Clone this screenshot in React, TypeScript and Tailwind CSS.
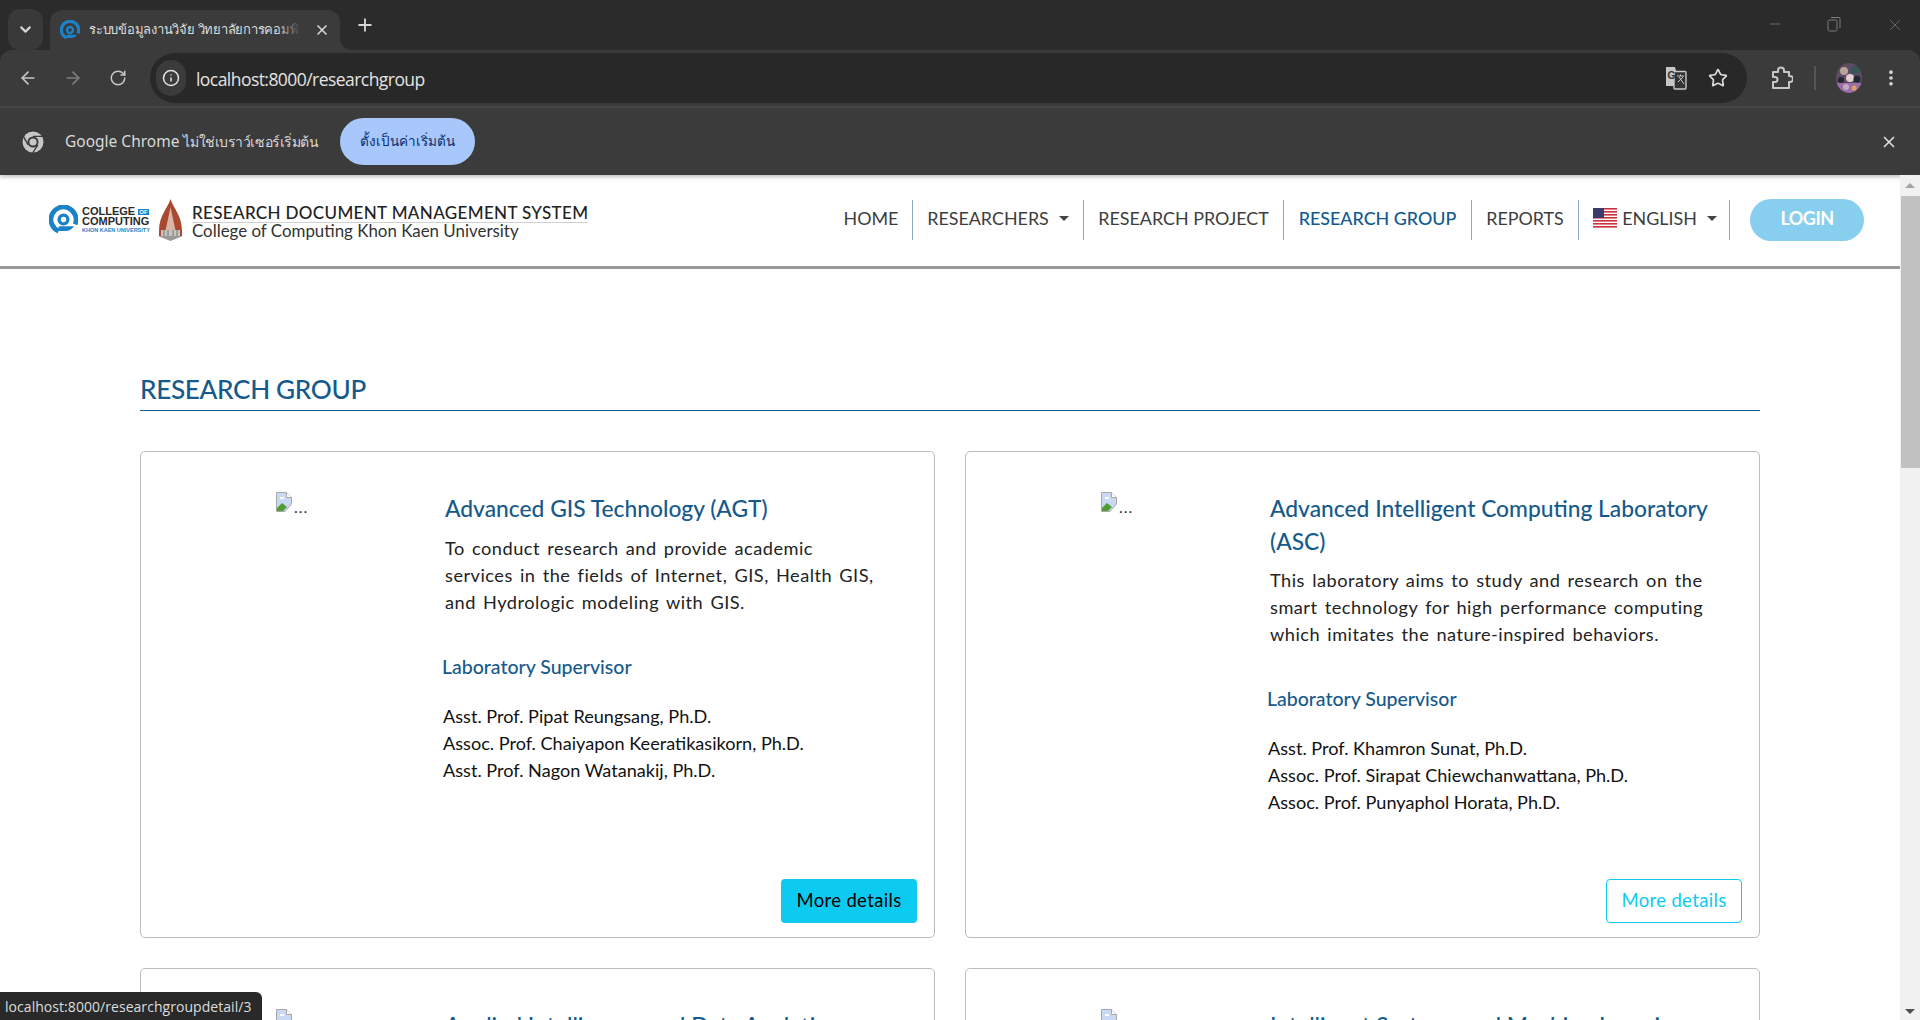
import React from "react";
import { ArrowLeft, ArrowRight, RotateCw, Info, Star, EllipsisVertical, ChevronDown, X, Plus, Minus } from "lucide-react";

const UI = "font-['Open_Sans','Noto_Sans',sans-serif]";
const SITE = "font-['Lato','Noto_Sans',sans-serif]";

function CocLogo({ size = 20 }: { size?: number }) {
  return (
    <svg width={size} height={size} viewBox="0 0 30 30" className="shrink-0">
      <path d="M10 27 A13 13 0 1 1 27 20" fill="none" stroke="#1b82c8" strokeWidth="5" />
      <path d="M10 22 V27 H18 A13 13 0 0 0 26 22 Z" fill="#1b82c8" />
      <circle cx="15" cy="15" r="4.5" fill="none" stroke="#1b82c8" strokeWidth="3.5" />
    </svg>
  );
}

function Temple() {
  return (
    <svg width="25" height="42" viewBox="0 0 25 42" className="shrink-0">
      <path d="M12.5 0 C15 9 24 16 24 32 L24 37 H1 V32 C1 16 10 9 12.5 0Z" fill="#a9492f" />
      <path d="M12.5 8 L15 20 L18 34 H7 L10 20Z" fill="#d9b7a8" />
      <path d="M3 31 H22 V37 H3Z" fill="#c8c3c0" />
      <path d="M6 31 V37 M10 31 V37 M15 31 V37 M19 31 V37" stroke="#777" strokeWidth="1" />
      <path d="M0 37 H25 L12.5 42Z" fill="#999" />
    </svg>
  );
}

function Flag() {
  return (
    <svg width="24" height="20" viewBox="0 0 24 20" className="shrink-0">
      <rect width="24" height="20" fill="#fff" />
      {[0, 3, 6, 9, 12, 15, 18].map((y) => (
        <rect key={y} y={y} width="24" height="1.6" fill="#c8323c" />
      ))}
      <rect width="11" height="10" fill="#3c3b6e" />
    </svg>
  );
}

function BrokenImage() {
  return (
    <svg width="16" height="20" viewBox="0 0 16 20" className="shrink-0">
      <path d="M0.5 0.5 H10.5 L15.5 5.5 V12 L9 19.5 H0.5Z" fill="#c9d9f3" stroke="#a8a8a8" />
      <path d="M10.5 0.5 V5.5 H15.5" fill="#fff" stroke="#a8a8a8" />
      <path d="M1 19 V16 L6 11 L11 15 L7 19Z" fill="#4f9c34" />
      <path d="M4 5 h4 v2 h-4z" fill="#fff" />
    </svg>
  );
}

function Avatar() {
  return (
    <svg width="26" height="30" viewBox="0 0 26 30" className="shrink-0">
      <defs>
        <clipPath id="av"><ellipse cx="13" cy="15" rx="13" ry="15" /></clipPath>
      </defs>
      <g clipPath="url(#av)">
        <rect width="26" height="30" fill="#5d4a63" />
        <rect x="0" y="20" width="26" height="10" fill="#9a6fa5" />
        <circle cx="8" cy="8" r="4" fill="#b9a49a" />
        <circle cx="19" cy="7" r="4" fill="#2f5a58" />
        <circle cx="14" cy="15" r="4" fill="#e2cfd4" />
        <circle cx="5" cy="17" r="3" fill="#26262e" />
        <circle cx="21" cy="16" r="3.5" fill="#1f2a2e" />
        <circle cx="10" cy="24" r="3" fill="#c9a9c9" />
        <circle cx="18" cy="25" r="2.5" fill="#e0a06c" />
      </g>
    </svg>
  );
}

function TranslateIcon() {
  return (
    <svg width="22" height="24" viewBox="0 0 22 24" className="shrink-0">
      <path d="M1 1 H10 L15 20 H1Z" fill="#c7c7c7" />
      <rect x="9" y="5.5" width="12" height="17.5" rx="1" fill="#333" stroke="#c7c7c7" strokeWidth="1.4" />
      <text x="2.5" y="13" fontSize="10" fontWeight="700" fill="#333" fontFamily="Liberation Sans">G</text>
      <path d="M12 10 H19 M15.5 8.5 V10 M13 16 L18 11 M14 11 L19 18" stroke="#c7c7c7" strokeWidth="1" fill="none" />
    </svg>
  );
}

function ExtensionIcon() {
  return (
    <svg width="22" height="24" viewBox="0 0 22 24" fill="none" stroke="#c7c7c7" strokeWidth="2" strokeLinejoin="round" className="shrink-0">
      <path d="M2 6 H7 V4.5 A3 3 0 0 1 13 4.5 V6 H18 V10 H19 A3 3 0 0 1 19 16 H18 V22 H2 V16 H4 A2.5 2.5 0 0 0 4 11 H2 Z" />
    </svg>
  );
}

function ChromeLogo() {
  return (
    <svg width="24" height="26" viewBox="0 0 24 24" className="shrink-0">
      <circle cx="12" cy="12" r="10.5" fill="#c7c7c7" />
      <circle cx="12" cy="12" r="5.5" fill="#3b3b3b" />
      <circle cx="12" cy="12" r="3.6" fill="#c7c7c7" />
      <path d="M12 6.4 H22 M7.2 14.8 L2.5 6.6 M16.8 14.8 L11.7 23" stroke="#3b3b3b" strokeWidth="1.4" />
    </svg>
  );
}

function BrowserChrome() {
  return (
    <div className={`${UI} shrink-0 bg-[#2b2b2b]`}>
      <div className="flex h-[50px] items-end pl-2">
        <div className="mb-[-1px] flex h-[41px] w-[35px] items-center justify-center self-start mt-[9px] rounded-xl bg-[#393939]">
          <ChevronDown size={17} strokeWidth={3} className="text-[#d5d5d5]" />
        </div>
        <div className="relative ml-[7px] flex h-[40px] w-[290px] items-center rounded-t-xl bg-[#3b3b3b] pl-[10px] pr-[10px]">
          <CocLogo size={20} />
          <div className="relative ml-[9px] w-[212px] overflow-hidden whitespace-nowrap text-[13px] tracking-[-0.25px] text-[#dddddd] font-['Noto_Sans','Liberation_Sans',sans-serif]">
            ระบบข้อมูลงานวิจัย วิทยาลัยการคอมพิ
            <span className="absolute inset-y-0 right-0 w-[24px] bg-gradient-to-r from-transparent to-[#3b3b3b]" />
          </div>
          <X size={16} strokeWidth={2.5} className="ml-auto text-[#d8d8d8]" />
          <svg width="12" height="12" viewBox="0 0 12 12" className="absolute bottom-0 right-[-12px]">
            <path d="M0 0 V12 H12 A12 12 0 0 1 0 0Z" fill="#3b3b3b" />
          </svg>
        </div>
        <Plus size={20} strokeWidth={2.2} className="mb-[15px] ml-[15px] text-[#d8d8d8]" />
        <div className="ml-auto flex h-[50px] items-start pt-[16px] text-[#7c7c7c]">
          <Minus size={16} strokeWidth={1.2} className="mr-[44px]" />
          <svg width="14" height="16" viewBox="0 0 14 16" className="mr-[45px]" fill="none" stroke="#7c7c7c">
            <rect x="1" y="4" width="9" height="11" rx="1.5" />
            <path d="M4 1.5 H12 A1 1 0 0 1 13 2.5 V12" />
          </svg>
          <X size={18} strokeWidth={1} className="mr-[16px]" />
        </div>
      </div>
      <div className="flex h-[58px] items-center rounded-t-xl border-b-2 border-[#474747] bg-[#3b3b3b] pl-[18px] pr-[14px]">
        <ArrowLeft size={20} className="text-[#c7c7c7]" />
        <ArrowRight size={20} className="ml-[25px] text-[#7e7e7e]" />
        <RotateCw size={18} className="ml-[26px] text-[#c7c7c7]" />
        <div className="ml-[23px] flex h-[50px] w-[1597px] items-center rounded-full bg-[#282828] pl-[6px] pr-[19px]">
          <div className="flex h-[36px] w-[30px] items-center justify-center rounded-full bg-[#3b3b3b]">
            <Info size={18} className="text-[#e3e3e3]" />
          </div>
          <span className="ml-[10px] mt-[2px] text-[17.5px] tracking-[-0.55px] text-[#e3e3e3]">localhost:8000/researchgroup</span>
          <div className="ml-auto flex items-center gap-[21px]">
            <TranslateIcon />
            <Star size={20} strokeWidth={2} className="text-[#dcdcdc]" />
          </div>
        </div>
        <div className="ml-[24px]"><ExtensionIcon /></div>
        <div className="ml-[21px] h-[24px] w-[2px] bg-[#555555]" />
        <div className="ml-[20px]"><Avatar /></div>
        <EllipsisVertical size={20} strokeWidth={2.4} className="ml-[19px] text-[#d8d8d8]" />
      </div>
      <div className="flex h-[67px] items-center bg-[#3b3b3b] pl-[21px] pr-[22px] shadow-[0_2px_4px_rgba(0,0,0,0.25)]">
        <ChromeLogo />
        <span className="ml-[20px] text-[15.5px] text-[#d8d8d8] font-['Noto_Sans','Open_Sans',sans-serif]">Google Chrome <span className="text-[14px] tracking-[-0.45px]">ไม่ใช่เบราว์เซอร์เริ่มต้น</span></span>
        <div className="ml-[22px] flex h-[47px] w-[135px] items-center justify-center rounded-full bg-[#a8c7fa] text-[13.5px] text-[#062e6f] font-['Noto_Sans','Open_Sans',sans-serif]">ตั้งเป็นค่าเริ่มต้น</div>
        <X size={18} strokeWidth={2.2} className="ml-auto text-[#dddddd]" />
      </div>
    </div>
  );
}

function NavItem({ children, active, last, caret, cls }: { children: React.ReactNode; active?: boolean; last?: boolean; caret?: boolean; cls: string }) {
  return (
    <div className={`flex h-[40px] items-center justify-center pb-[3px] ${cls} ${last ? "" : "border-r border-[#8ea6c2]"} ${active ? "text-[#125a8f] font-medium" : "text-[#3d3d3d]"}`}>
      {children}
      {caret && <span className="ml-[10px] h-0 w-0 border-x-[5px] border-t-[5px] border-x-transparent border-t-[#444]" />}
    </div>
  );
}

function Navbar() {
  return (
    <div className={`${SITE} flex h-[94px] shrink-0 items-center border-b-[3px] border-[#999999] pb-[2px] pl-[49px] pr-[36px]`}>
      <div className="flex items-center">
        <CocLogo size={29} />
        <div className="ml-[4px] flex w-[71px] flex-col font-['Liberation_Sans',sans-serif] font-bold text-[#2a2a2a]">
          <span className="text-[11px] leading-[10px]">COLLEGE <span className="bg-[#1b82c8] px-[1px] text-[6px] leading-[6px] text-white align-middle">OF</span></span>
          <span className="text-[11px] leading-[10px]">COMPUTING</span>
          <span className="mt-[1px] whitespace-nowrap text-[5.5px] leading-[6px] text-[#1b82c8]">KHON KAEN UNIVERSITY</span>
        </div>
        <div className="ml-[5px]"><Temple /></div>
        <div className="ml-[9px] flex flex-col">
          <span className="border-b border-[#d0d0d0] pt-[3px] text-[17px] font-medium leading-[18px] tracking-[0.35px] text-[#222222]">RESEARCH DOCUMENT MANAGEMENT SYSTEM</span>
          <span className="text-[16.9px] leading-[15px] text-[#333333]">College of Computing Khon Kaen University</span>
        </div>
      </div>
      <nav className="ml-auto flex items-center text-[17.9px]">
        <NavItem cls="w-[83px]">HOME</NavItem>
        <NavItem cls="w-[171px]" caret>RESEARCHERS</NavItem>
        <NavItem cls="w-[200px]">RESEARCH PROJECT</NavItem>
        <NavItem cls="w-[188px]" active>RESEARCH GROUP</NavItem>
        <NavItem cls="w-[107px]">REPORTS</NavItem>
        <NavItem cls="w-[151px] pl-[2px]" caret><Flag /><span className="ml-[5px]">ENGLISH</span></NavItem>
        <div className="ml-[20px] flex h-[42px] w-[114px] items-center justify-center rounded-full bg-[#88cfef] pb-[2px] text-[18px] font-bold tracking-[-0.5px] text-white">LOGIN</div>
      </nav>
    </div>
  );
}

type Group = { title: React.ReactNode; desc: React.ReactNode; names: string[]; solid?: boolean };

function Card({ g }: { g: Group }) {
  return (
    <div className="flex h-[487px] flex-col rounded-[5px] border border-[#bdbdbd]">
      <div className="flex flex-1">
        <div className="flex w-[304px] shrink-0 items-start pl-[135px] pt-[40px] text-[16px] text-[#333]">
          <BrokenImage />
          <span className="ml-[2px] mt-[3px] tracking-[1px]">...</span>
        </div>
        <div className="flex-1 pr-[25px] pt-[40px]">
          <div className="whitespace-nowrap text-[22.8px] font-medium leading-[32.5px] text-[#165a8c]">{g.title}</div>
          <div className="mt-[10px] text-[18.2px] leading-[27px] tracking-[0.5px] [word-spacing:2px] text-[#222222]">{g.desc}</div>
          <div className="ml-[-3px] mt-[37px] text-[19.5px] font-medium leading-[27px] text-[#165a8c]">Laboratory Supervisor</div>
          <div className="ml-[-2px] mt-[23px] text-[18.1px] leading-[27px] text-[#111111]">
            {g.names.map((n) => <div key={n}>{n}</div>)}
          </div>
        </div>
      </div>
      <div className="flex justify-end pb-[14px] pr-[17px]">
        {g.solid ? (
          <div className="flex h-[44px] w-[136px] items-center justify-center rounded-[4px] bg-[#0dcaf0] text-[18.5px] tracking-[0.35px] text-black">More details</div>
        ) : (
          <div className="flex h-[44px] w-[136px] items-center justify-center rounded-[4px] border border-[#0dcaf0] text-[18.5px] tracking-[0.35px] text-[#0dcaf0]">More details</div>
        )}
      </div>
    </div>
  );
}

const groups: Group[] = [
  {
    title: "Advanced GIS Technology (AGT)",
    desc: <>To conduct research and provide academic<br />services in the fields of Internet, GIS, Health GIS,<br />and Hydrologic modeling with GIS.</>,
    names: ["Asst. Prof. Pipat Reungsang, Ph.D.", "Assoc. Prof. Chaiyapon Keeratikasikorn, Ph.D.", "Asst. Prof. Nagon Watanakij, Ph.D."],
    solid: true,
  },
  {
    title: <>Advanced Intelligent Computing Laboratory<br />(ASC)</>,
    desc: <>This laboratory aims to study and research on the<br />smart technology for high performance computing<br />which imitates the nature-inspired behaviors.</>,
    names: ["Asst. Prof. Khamron Sunat, Ph.D.", "Assoc. Prof. Sirapat Chiewchanwattana, Ph.D.", "Assoc. Prof. Punyaphol Horata, Ph.D."],
  },
  { title: "Applied Intelligence and Data Analytics", desc: "", names: [] },
  { title: "Intelligent Systems and Machine Learning", desc: "", names: [] },
];

function Scrollbar() {
  return (
    <div className="flex w-[20px] shrink-0 flex-col items-center bg-[#f1f1f1]">
      <div className="flex h-[21px] items-center justify-center">
        <span className="h-0 w-0 border-x-[5px] border-b-[5px] border-x-transparent border-b-[#a3a3a3]" />
      </div>
      <div className="ml-[1px] h-[272px] w-[19px] bg-[#c1c1c1]" />
      <div className="mt-auto flex h-[17px] items-center justify-center">
        <span className="h-0 w-0 border-x-[5px] border-t-[5px] border-x-transparent border-t-[#505050]" />
      </div>
    </div>
  );
}

export default function App() {
  return (
    <div className="relative flex h-[1020px] w-full flex-col overflow-hidden bg-white">
      <BrowserChrome />
      <div className="flex min-h-0 flex-1">
        <div className={`${SITE} min-w-0 flex-1 overflow-hidden`}>
          <Navbar />
          <div className="pl-[140px] pr-[140px] pt-[102px]">
            <h1 className="border-b border-[#165a8c] pb-[3px] text-[26.2px] font-medium leading-[36px] tracking-[-0.35px] text-[#165a8c]">RESEARCH GROUP</h1>
            <div className="mt-[40px] grid grid-cols-2 gap-x-[30px] gap-y-[30px]">
              {groups.map((g, i) => <Card key={i} g={g} />)}
            </div>
          </div>
        </div>
        <Scrollbar />
      </div>
      <div className={`${UI} absolute bottom-0 left-0 flex h-[28px] w-[262px] items-center rounded-tr-md bg-[#292929] pl-[5px] text-[14px] tracking-[0.05px] text-[#dddddd]`}>localhost:8000/researchgroupdetail/3</div>
    </div>
  );
}
